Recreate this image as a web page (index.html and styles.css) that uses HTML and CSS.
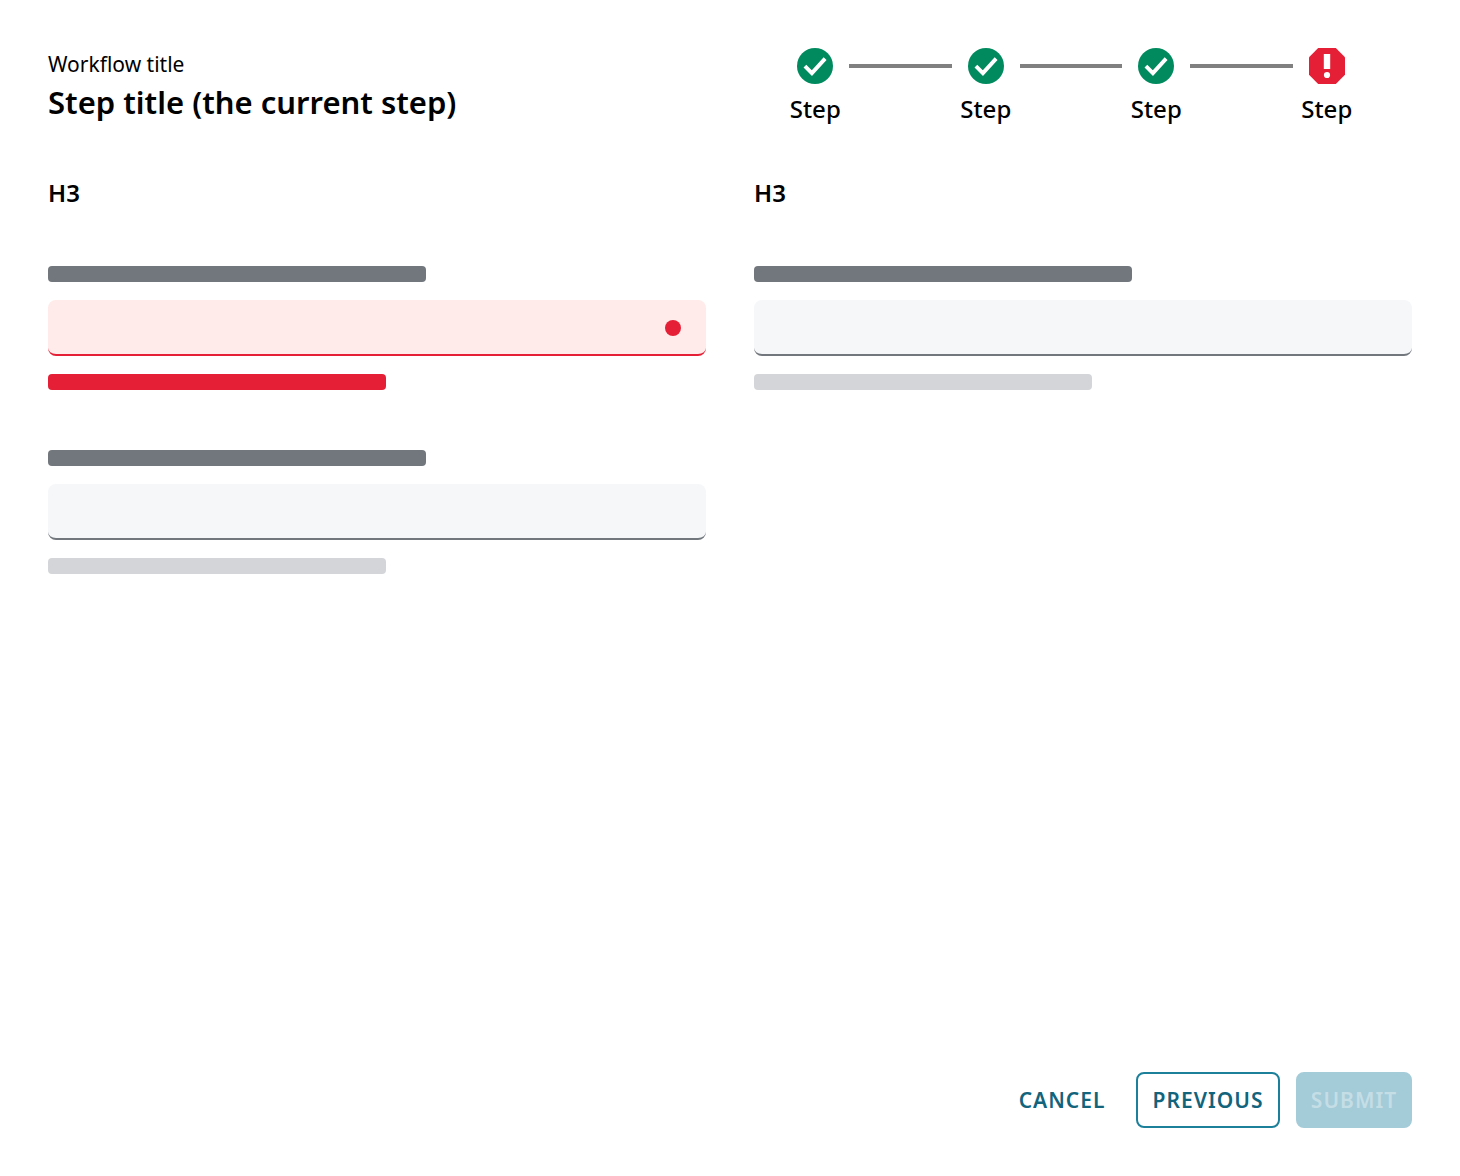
FILE: index.html
```html
<!DOCTYPE html>
<html lang="en">
<head>
  <meta charset="utf-8">
  <meta name="viewport" content="width=device-width, initial-scale=1">
  <title>Workflow title</title>
  <link rel="stylesheet" href="styles.css">
</head>
<body>
  <svg class="sprite" aria-hidden="true">
    <symbol id="icon-done" viewBox="0 0 36 36">
      <circle cx="18" cy="18" r="18" fill="#008a5e"/>
      <path d="M7.9 18.2 14.9 25.1 28.1 10.6" fill="none" stroke="#fff" stroke-width="3.9"/>
    </symbol>
    <symbol id="icon-error" viewBox="0 0 36 36">
      <path d="M9.2 0H26.8L36 9.2V26.8L26.8 36H9.2L0 26.8V9.2Z" fill="#e52036"/>
      <path d="M14.8 6H21.2V21H14.8Z" fill="#fff"/>
      <circle cx="18" cy="27" r="3.1" fill="#fff"/>
    </symbol>
  </svg>
  <div class="page">
    <header class="header">
      <div class="titles">
        <p class="workflow-title">Workflow title</p>
        <h1 class="step-title">Step title (the current step)</h1>
      </div>
      <ol class="stepper">
        <li class="step"><div class="track"><svg class="step-icon" aria-hidden="true"><use href="#icon-done"/></svg></div><span>Step</span></li>
        <li class="step"><div class="track"><svg class="step-icon" aria-hidden="true"><use href="#icon-done"/></svg></div><span>Step</span></li>
        <li class="step"><div class="track"><svg class="step-icon" aria-hidden="true"><use href="#icon-done"/></svg></div><span>Step</span></li>
        <li class="step" aria-current="step"><div class="track"><svg class="step-icon" aria-hidden="true"><use href="#icon-error"/></svg></div><span>Step</span></li>
      </ol>
    </header>
    <form class="form">
      <div class="columns">
        <section class="column">
          <h3 class="heading">H3</h3>
          <div class="field field-error">
            <label class="bar label-bar" for="field-1" aria-label="Field 1"></label>
            <div class="control"><input class="input" id="field-1" type="text" aria-invalid="true"><span class="dot"></span></div>
            <div class="bar helper-bar"></div>
          </div>
          <div class="field">
            <label class="bar label-bar" for="field-2" aria-label="Field 2"></label>
            <div class="control"><input class="input" id="field-2" type="text"></div>
            <div class="bar helper-bar"></div>
          </div>
        </section>
        <section class="column">
          <h3 class="heading">H3</h3>
          <div class="field">
            <label class="bar label-bar" for="field-3" aria-label="Field 3"></label>
            <div class="control"><input class="input" id="field-3" type="text"></div>
            <div class="bar helper-bar"></div>
          </div>
        </section>
      </div>
      <footer class="actions">
        <button class="button" type="button">CANCEL</button>
        <button class="button button-outline" type="button">PREVIOUS</button>
        <button class="button button-primary" type="submit" disabled>SUBMIT</button>
      </footer>
    </form>
  </div>
</body>
</html>
```
FILE: styles.css
```css
*, *::before, *::after { box-sizing: border-box; }

body {
  margin: 0;
  background: #fff;
  color: #000;
  font-family: "Noto Sans", "Open Sans", sans-serif;
}

h1, h3, p, ol { margin: 0; padding: 0; }

.sprite { display: none; }

.page {
  display: flex;
  flex-direction: column;
  min-height: 100vh;
  padding: 48px;
}

.header {
  display: grid;
  grid-template-columns: 1fr 1fr;
}

.workflow-title {
  font-size: 21px;
  line-height: 32px;
}

.step-title {
  font-size: 31px;
  font-weight: 600;
  line-height: 44px;
}

.stepper {
  display: grid;
  grid-template-columns: repeat(4, 1fr);
  list-style: none;
}

.step {
  display: flex;
  flex-direction: column;
  gap: 8px;
  text-align: center;
  font-size: 24px;
  font-weight: 500;
  line-height: 34px;
}

.track {
  display: flex;
  align-items: center;
  gap: 16px;
}

.track::before,
.track::after {
  content: "";
  flex: 1;
  height: 4px;
  background: #808080;
}

.step:first-child .track::before,
.step:last-child .track::after { background: none; }

.step-icon {
  flex: none;
  width: 36px;
  height: 36px;
}

.form {
  display: flex;
  flex: 1;
  flex-direction: column;
  justify-content: space-between;
  gap: 48px;
  padding-top: 50px;
}

.columns {
  display: grid;
  grid-template-columns: 1fr 1fr;
  gap: 48px;
}

.column {
  display: flex;
  flex-direction: column;
  gap: 60px;
}

.heading {
  font-size: 24px;
  font-weight: 600;
  line-height: 34px;
}

.field {
  display: flex;
  flex-direction: column;
  gap: 18px;
}

.heading + .field { margin-top: -4px; }

.bar {
  height: 16px;
  border-radius: 4px;
}

.label-bar {
  width: 378px;
  max-width: 100%;
  background: #72777d;
}

.helper-bar {
  width: 338px;
  max-width: 100%;
  background: #d4d5d9;
}

.control {
  display: flex;
  align-items: center;
  height: 56px;
  padding: 2px 25px 0;
  border-bottom: 2px solid #72777d;
  border-radius: 8px;
  background: #f5f7f9;
}

.input {
  flex: 1;
  min-width: 0;
  height: 100%;
  padding: 0;
  border: 0;
  outline: 0;
  background: none;
  font: inherit;
  font-size: 21px;
}

.control:focus-within { box-shadow: 0 0 0 2px #1c809b; }

.dot {
  width: 16px;
  height: 16px;
  border-radius: 50%;
  background: #e52036;
}

.field-error .control {
  border-color: #e52036;
  background: #ffebe9;
}

.field-error .helper-bar { background: #e52036; }

.actions {
  display: flex;
  justify-content: flex-end;
  gap: 16px;
}

.button {
  min-width: 116px;
  height: 56px;
  padding: 0 12px;
  border: 2px solid transparent;
  border-radius: 8px;
  background: none;
  color: #12647d;
  font: inherit;
  font-size: 21px;
  font-weight: 600;
  letter-spacing: 1px;
}

.button-outline {
  min-width: 144px;
  border-color: #1c809b;
}

.button-primary {
  border-color: #a4cbd8;
  background: #a4cbd8;
  color: #c5dee6;
}
```
